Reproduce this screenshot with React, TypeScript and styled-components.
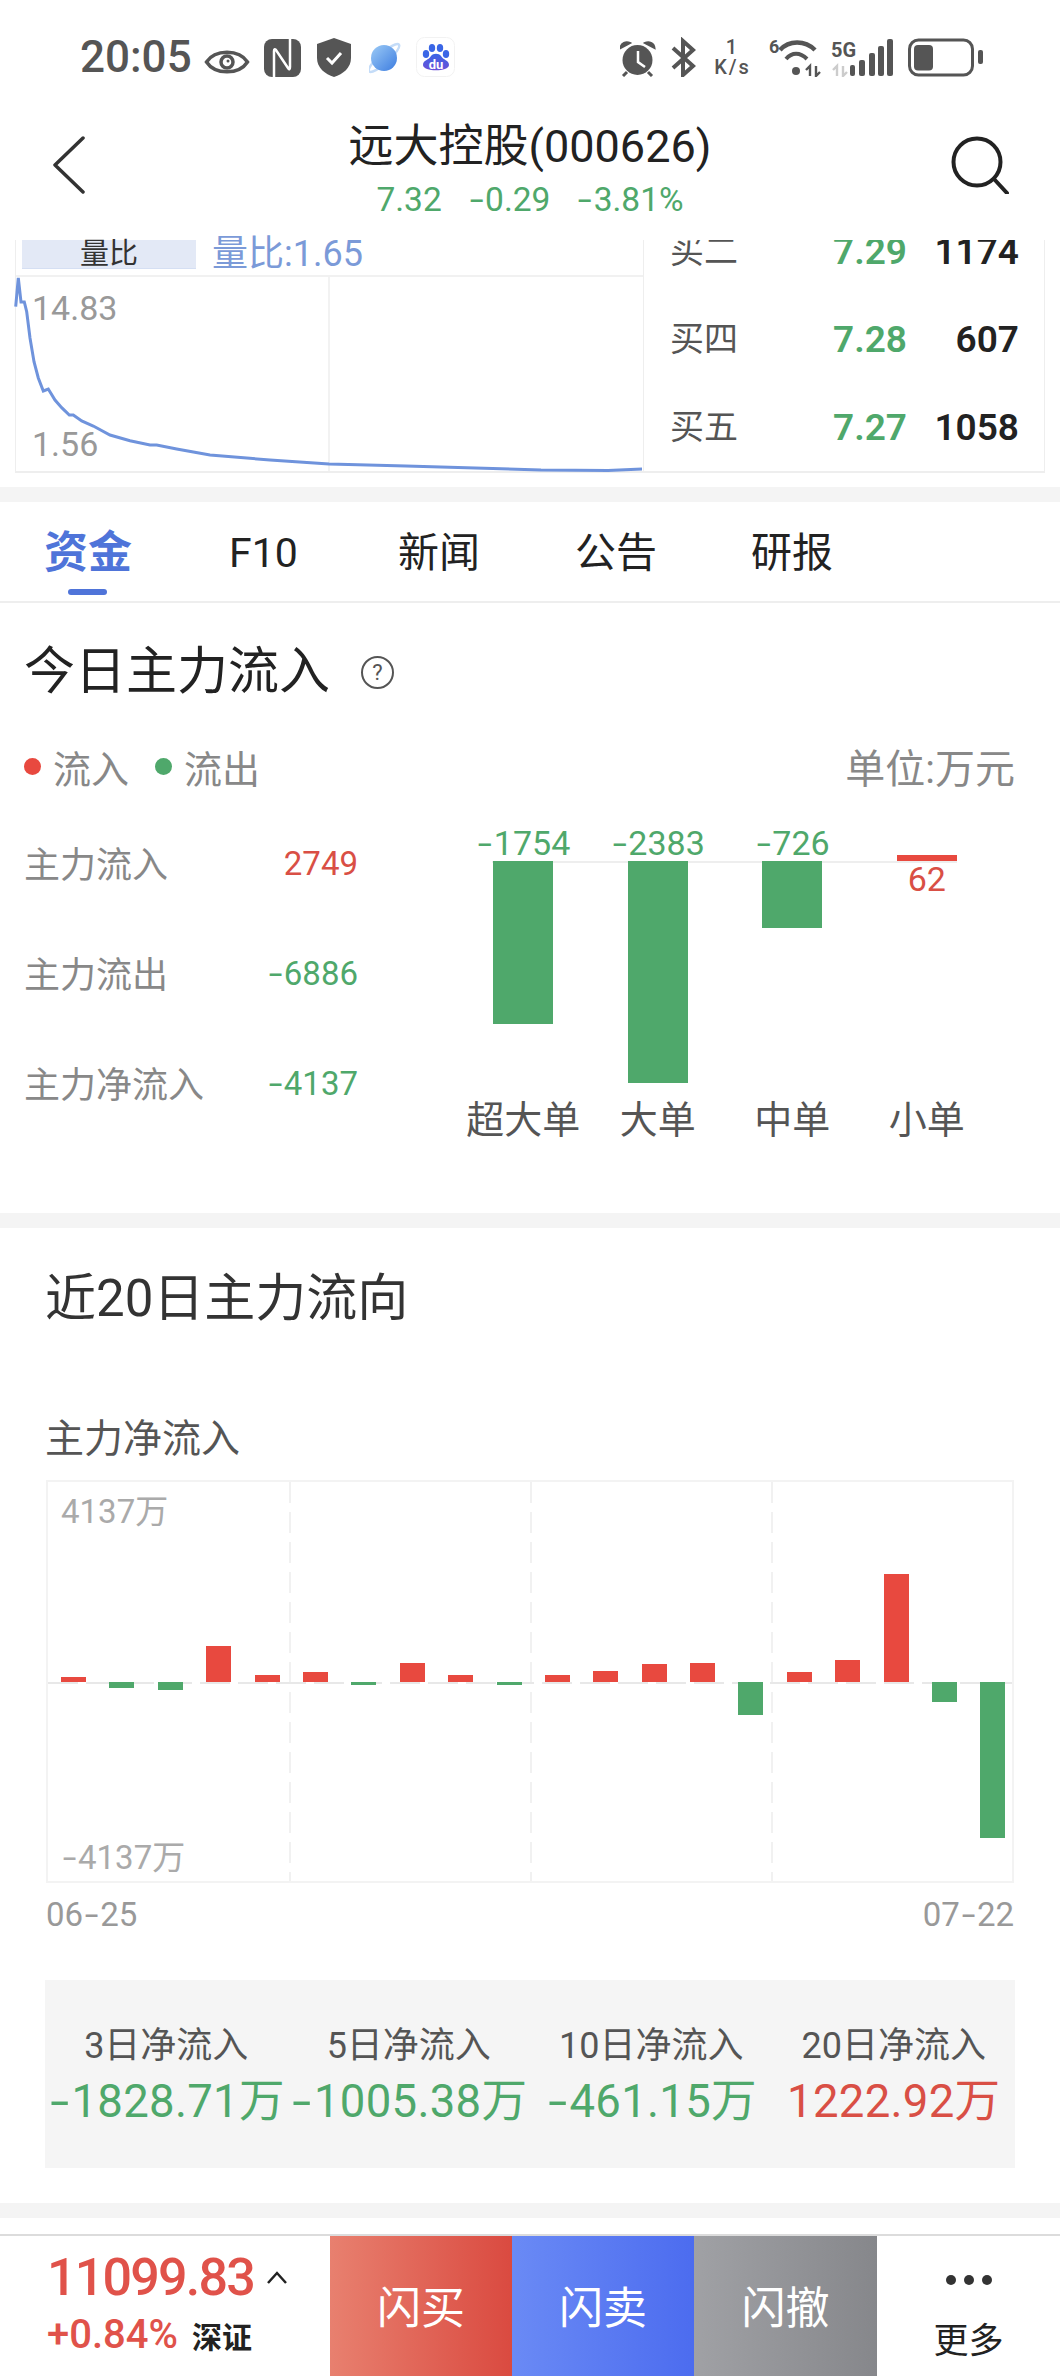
import React from 'react'
import styled, { createGlobalStyle } from 'styled-components'

const GREEN = '#4fa86b'
const RED = '#e8493f'
const TEXT_RED = '#d94f45'
const BLUE = '#4f74d9'
const ICON = '#555'

const GlobalStyle = createGlobalStyle`
  html, body {
    margin: 0;
    padding: 0;
    background: #fff;
    font-family: Roboto, "Noto Sans CJK SC", sans-serif;
  }
`

const Page = styled.div`
  width: 1060px;
  height: 2376px;
  overflow: hidden;
  background: #fff;
  display: flex;
  flex-direction: column;
`

const StatusBar = styled.div`
  height: 90px;
  padding: 37px 77px 0 80px;
  box-sizing: border-box;
  display: flex;
  justify-content: space-between;
  align-items: flex-start;
`

const StatusGroup = styled.div<{ $gap: number }>`
  display: flex;
  align-items: center;
  height: 40px;
  gap: ${(p) => p.$gap}px;
`

const Clock = styled.span`
  width: 110px;
  font-size: 44px;
  font-weight: 500;
  line-height: 40px;
  color: ${ICON};
`

const Speed = styled.div`
  width: 48px;
  padding-right: 9px;
  box-sizing: border-box;
  display: flex;
  flex-direction: column;
  align-items: center;
  font-size: 20px;
  font-weight: 500;
  line-height: 20px;
  letter-spacing: 2px;
  color: ${ICON};
`

const Nav = styled.div`
  height: 150px;
  padding: 32px 51px 0;
  box-sizing: border-box;
  display: grid;
  grid-template-columns: 1fr auto 1fr;
  align-items: start;
`

const BackIcon = styled.svg`
  margin: 14px 0 0 2px;
`

const SearchIcon = styled.svg`
  margin-top: 14px;
  justify-self: end;
`

const NavCenter = styled.div`
  display: flex;
  flex-direction: column;
  align-items: center;
  gap: 8px;
`

const NavTitle = styled.div`
  font-size: 45px;
  line-height: 50px;
  color: #222;
`

const NavQuote = styled.div`
  display: flex;
  gap: 26px;
  font-size: 33.5px;
  line-height: 40px;
  color: ${GREEN};
`

// the source font draws a much wider minus than Roboto does
const Dash = styled.span`
  display: inline-block;
  padding: 0 0.12em;
  transform: scaleX(1.5);
`

const Quote = styled.div`
  height: 231px;
  margin: 0 15px 0 15px;
  display: grid;
  grid-template-columns: 628px 1fr;
  border-bottom: 2px solid #eee;
  box-sizing: content-box;
`

const Trend = styled.div`
  display: flex;
  flex-direction: column;
  border-left: 1px solid #eee;
`

const IndicatorRow = styled.div`
  height: 37px;
  flex-shrink: 0;
  box-sizing: border-box;
  padding-left: 6px;
  display: flex;
  align-items: flex-start;
  gap: 16px;
  border-bottom: 2px solid #f1f1f1;
`

const IndicatorTab = styled.div`
  width: 174px;
  height: 29px;
  box-sizing: border-box;
  border-bottom: 1px solid #d5dff3;
  background: #e3e9f6;
  color: #333;
  font-size: 29px;
  line-height: 28px;
  text-align: center;
`

const IndicatorValue = styled.div`
  color: #7b9ad8;
  font-size: 36px;
  line-height: 29px;
  height: 29px;
`

const TrendPlot = styled.div`
  position: relative;
  flex: 1;
`

const TrendSvg = styled.svg`
  display: block;
  position: absolute;
  left: 0;
  top: 0;
  overflow: visible;
`

const TrendLabel = styled.span<{ $top: number }>`
  position: absolute;
  left: 16px;
  top: ${(p) => p.$top}px;
  font-size: 34px;
  line-height: 36px;
  color: #999;
`

const Book = styled.div`
  display: flex;
  flex-direction: column;
  justify-content: flex-end;
  overflow: hidden;
  border-left: 1px solid #eee;
  border-right: 1px solid #eee;
`

const BookRow = styled.div`
  height: 88px;
  flex-shrink: 0;
  padding: 0 25px 0 26px;
  display: grid;
  grid-template-columns: 163px 1fr auto;
  align-items: center;
`

const BookLabel = styled.span`
  font-size: 34px;
  line-height: 40px;
  color: #555;
`

const BookPrice = styled.span`
  font-size: 37px;
  font-weight: 600;
  color: ${GREEN};
`

const BookVolume = styled.span`
  font-size: 37px;
  font-weight: 600;
  color: #222;
`

const Band = styled.div<{ $top?: number }>`
  height: 15px;
  flex-shrink: 0;
  margin-top: ${(p) => p.$top ?? 0}px;
  background: #f4f4f4;
`

const Tabs = styled.div`
  height: 101px;
  flex-shrink: 0;
  box-sizing: border-box;
  padding: 26px 0 0 44px;
  display: grid;
  grid-template-columns: 185px 169px 177px 176px auto;
  justify-content: start;
  border-bottom: 2px solid #eee;
`

const Tab = styled.div<{ $active?: boolean }>`
  position: relative;
  height: 50px;
  font-size: ${(p) => (p.$active ? 44 : 41)}px;
  line-height: 50px;
  font-weight: ${(p) => (p.$active ? 700 : 400)};
  color: ${(p) => (p.$active ? BLUE : '#222')};

  ${(p) =>
    p.$active &&
    `
    &::after {
      content: '';
      position: absolute;
      left: 24px;
      top: 61px;
      width: 39px;
      height: 6px;
      border-radius: 3px;
      background: ${BLUE};
    }
  `}
`

const TodaySection = styled.section`
  height: 610px;
  flex-shrink: 0;
  box-sizing: border-box;
  padding: 44px 45px 0 24px;
`

const TitleRow = styled.div`
  display: flex;
  align-items: center;
  gap: 30px;
  height: 50px;
`

const TodayTitle = styled.h2`
  margin: 0;
  font-size: 51px;
  font-weight: 400;
  line-height: 50px;
  color: #222;
`

const LegendRow = styled.div`
  margin-top: 47px;
  height: 44px;
  display: flex;
  align-items: center;
  font-size: 38px;
  color: #888;
`

const LegendItem = styled.div`
  display: flex;
  align-items: center;
  gap: 12px;
  margin: 0 26px 0 0;
`

const LegendDot = styled.i<{ $color: string }>`
  width: 17px;
  height: 17px;
  border-radius: 50%;
  background: ${(p) => p.$color};
`

const Unit = styled.div`
  margin-left: auto;
  font-size: 40px;
`

const TodayBody = styled.div`
  margin-top: 20px;
  display: flex;
`

const Stats = styled.div`
  width: 334px;
  flex-shrink: 0;
`

const StatRow = styled.div`
  height: 110px;
  display: flex;
  justify-content: space-between;
  align-items: center;
`

const StatLabel = styled.span`
  font-size: 36px;
  line-height: 44px;
  margin-top: 5px;
  color: #888;
`

const StatValue = styled.span<{ $color: string }>`
  font-size: 33px;
  color: ${(p) => p.$color};
`

const FlowChart = styled.div`
  position: relative;
  margin-left: 98px;
  width: 538px;
  display: grid;
  grid-template-columns: repeat(4, 134.5px);

  &::before {
    content: '';
    position: absolute;
    left: 36px;
    top: 53px;
    width: 465px;
    height: 2px;
    background: #eee;
  }
`

const FlowColumn = styled.div`
  display: flex;
  flex-direction: column;
  align-items: center;
  position: relative;
`

const FlowAbove = styled.div`
  height: 53px;
  display: flex;
  flex-direction: column;
  justify-content: flex-end;
  align-items: center;
`

const FlowBelow = styled.div`
  height: 234px;
  display: flex;
  flex-direction: column;
  align-items: center;
`

const FlowValue = styled.span<{ $color: string }>`
  font-size: 34px;
  line-height: 36px;
  white-space: nowrap;
  color: ${(p) => p.$color};
`

const FlowBar = styled.div<{ $color: string; $h: number }>`
  width: 60px;
  height: ${(p) => p.$h}px;
  flex-shrink: 0;
  background: ${(p) => p.$color};
`

const FlowLabel = styled.div`
  height: 50px;
  font-size: 38px;
  line-height: 50px;
  color: #555;
`

const TrendSection = styled.section`
  flex-shrink: 0;
  box-sizing: border-box;
  padding: 43px 45px 0;
`

const TrendTitle = styled.h2`
  margin: 0;
  font-size: 51px;
  line-height: 56px;
  font-weight: 400;
  color: #333;
`

const TrendSub = styled.div`
  margin-top: 90px;
  font-size: 39px;
  line-height: 44px;
  color: #555;
`

const NetChart = styled.div`
  position: relative;
  margin: 19px 0 0 1px;
  width: 968px;
  height: 403px;
  box-sizing: border-box;
  border: 2px solid #f3f3f3;
`

const GridLines = styled.div`
  position: absolute;
  inset: 0;
  display: grid;
  grid-template-columns: repeat(4, 1fr);

  > div + div {
    background: repeating-linear-gradient(#f1f1f1 0 21px, transparent 21px 30px) left top / 2px 100% no-repeat;
  }
`

const ZeroLine = styled.div`
  position: absolute;
  left: 0;
  right: 0;
  top: 200px;
  height: 2px;
  background: repeating-linear-gradient(90deg, #e8e8e8 0 30px, transparent 30px 38px);
`

const NetBars = styled.div`
  position: absolute;
  inset: 0;
  padding-left: 13px;
  display: flex;
`

const NetSlot = styled.div`
  width: 48.4px;
  flex-shrink: 0;
  display: flex;
  flex-direction: column;
`

const NetUp = styled.div`
  height: 200px;
  display: flex;
  flex-direction: column;
  justify-content: flex-end;
`

const NetBar = styled.div<{ $color: string; $h: number }>`
  width: 25px;
  height: ${(p) => p.$h}px;
  background: ${(p) => p.$color};
`

const NetAxis = styled.span<{ $top: number }>`
  position: absolute;
  left: 13px;
  top: ${(p) => p.$top}px;
  font-size: 33px;
  line-height: 36px;
  color: #aaa;
`

const DateRow = styled.div`
  margin: 12px 0 0 1px;
  width: 968px;
  display: flex;
  justify-content: space-between;
  font-size: 33px;
  line-height: 40px;
  color: #999;
`

const Summary = styled.div`
  margin-top: 45px;
  height: 188px;
  background: #f5f5f5;
  display: grid;
  grid-template-columns: repeat(4, 1fr);
  box-sizing: border-box;
  padding-top: 43px;
`

const SummaryItem = styled.div`
  display: flex;
  flex-direction: column;
  align-items: center;
  white-space: nowrap;
`

const SummaryLabel = styled.span`
  font-size: 36px;
  line-height: 46px;
  color: #555;
`

const SummaryValue = styled.span<{ $color: string }>`
  margin-top: 6px;
  font-size: 45.5px;
  line-height: 54px;
  letter-spacing: 0.3px;
  color: ${(p) => p.$color};
`

const Footer = styled.div`
  margin-top: 16px;
  flex: 1;
  border-top: 2px solid #dcdcdc;
  display: grid;
  grid-template-columns: 330px 182px 182px 183px 1fr;
`

const IndexBox = styled.div`
  padding: 18px 0 0 47px;
  display: flex;
  flex-direction: column;
`

const IndexTop = styled.div`
  display: flex;
  align-items: center;
  gap: 12px;
  height: 48px;
`

const IndexValue = styled.span`
  font-size: 52px;
  font-weight: 500;
  line-height: 48px;
  letter-spacing: -1.8px;
  color: #e0524a;
`

const IndexBottom = styled.div`
  margin-top: 10px;
  display: flex;
  align-items: center;
  gap: 14px;
`

const IndexChange = styled.span`
  font-size: 40px;
  font-weight: 500;
  color: #e0524a;
  line-height: 46px;
`

const IndexName = styled.span`
  font-size: 30px;
  font-weight: 700;
  color: #222;
`

const Flash = styled.div<{ $from: string; $to: string }>`
  display: flex;
  align-items: center;
  justify-content: center;
  padding-bottom: 2px;
  font-size: 44px;
  color: #fff;
  background: linear-gradient(90deg, ${(p) => p.$from}, ${(p) => p.$to});
`

const More = styled.div`
  display: flex;
  flex-direction: column;
  align-items: center;
  padding-top: 39px;
  gap: 35px;
`

const MoreDots = styled.div`
  display: flex;
  gap: 8px;
`

const MoreDot = styled.i`
  width: 10px;
  height: 10px;
  border-radius: 50%;
  background: #333;
`

const MoreLabel = styled.span`
  font-size: 35px;
  line-height: 44px;
  color: #222;
`

const withDash = (text: string) => {
  const at = text.indexOf('-')
  if (at < 0) return text
  return (
    <>
      {text.slice(0, at)}
      <Dash>-</Dash>
      {text.slice(at + 1)}
    </>
  )
}

const books = [
  { label: '买二', price: '7.29', volume: '1174' },
  { label: '买四', price: '7.28', volume: '607' },
  { label: '买五', price: '7.27', volume: '1058' },
]

const stats = [
  { label: '主力流入', value: '2749', color: TEXT_RED },
  { label: '主力流出', value: '-6886', color: GREEN },
  { label: '主力净流入', value: '-4137', color: GREEN },
]

const flows = [
  { label: '超大单', value: '-1754', h: 163 },
  { label: '大单', value: '-2383', h: 222 },
  { label: '中单', value: '-726', h: 67 },
  { label: '小单', value: '62', h: 6, up: true },
]

const netBars = [5, -6, -8, 36, 7.5, 10, -3, 19, 7, -3, 7, 11, 18.5, 19, -32.5, 10, 22.5, 108, -20, -156]

const summary = [
  { label: '3日净流入', value: '-1828.71万', color: GREEN },
  { label: '5日净流入', value: '-1005.38万', color: GREEN },
  { label: '10日净流入', value: '-461.15万', color: GREEN },
  { label: '20日净流入', value: '1222.92万', color: TEXT_RED },
]

const trendLine =
  'M15.7 306.7 L18.3 278 L21 302 L24.3 302 L26.7 311.7 L30 338 L34 361.7 L38.3 378 L43.3 391 L48.3 389 L55 400 L61.7 407.7 L69.3 415 L73.3 415 L81.7 421 L93.3 426 L110 435 L130 440.7 L150 445 L156.7 445 L176.7 449 L210 455 L270 460 L329 464 L406 466 L541 470 L608 470.5 L642 469'

const App: React.FC = () => (
  <Page>
    <GlobalStyle />
    <StatusBar>
      <StatusGroup $gap={14}>
        <Clock>20:05</Clock>
        <svg width="46" height="40" viewBox="0 37 46 40" fill="none" stroke={ICON}>
          <path d="M2.5 62 C11 49 35 49 43.5 62 C35 75 11 75 2.5 62Z" strokeWidth="3.5" />
          <circle cx="23" cy="62" r="6" strokeWidth="3.5" />
          <circle cx="24" cy="61" r="1.5" fill={ICON} stroke="none" />
        </svg>
        <svg width="39" height="40" viewBox="0 37 39 40" fill="none">
          <rect x="0" y="39" width="37" height="38" rx="8" fill={ICON} />
          <path d="M10 77 V51 Q10 48 12 50 L24 68 Q26 71 26 67 V39" stroke="#fff" strokeWidth="2.5" />
        </svg>
        <svg width="38" height="40" viewBox="0 37 38 40">
          <path d="M17 38 L34 44 V58 C34 68 26 74 17 77 C8 74 0 68 0 58 V44Z" fill={ICON} />
          <path d="M10 58 L15 63 L24 53" fill="none" stroke="#fff" strokeWidth="3" />
        </svg>
        <svg width="33" height="40" viewBox="0 37 33 40">
          <defs>
            <linearGradient id="planet" x1="0" y1="0" x2="1" y2="1">
              <stop offset="0" stopColor="#9ccbf6" />
              <stop offset="1" stopColor="#3d7de0" />
            </linearGradient>
          </defs>
          <ellipse cx="15" cy="58" rx="20" ry="5" fill="none" stroke="#c4dcf8" strokeWidth="2.5" transform="rotate(-42 15 58)" />
          <circle cx="15" cy="58" r="13" fill="url(#planet)" />
        </svg>
        <svg width="39" height="40" viewBox="0 37 39 40">
          <defs>
            <linearGradient id="paw" x1="0" y1="0" x2="0" y2="1">
              <stop offset="0" stopColor="#3a66e6" />
              <stop offset="1" stopColor="#6a4fd8" />
            </linearGradient>
          </defs>
          <rect x="0.5" y="37.5" width="38" height="39" rx="8" fill="#fff" stroke="#f2f2f2" />
          <ellipse cx="10" cy="54" rx="3.2" ry="4" fill="#3a66e6" />
          <ellipse cx="16" cy="48" rx="3.2" ry="4" fill="#3a66e6" />
          <ellipse cx="24" cy="48" rx="3.2" ry="4" fill="#3a66e6" />
          <ellipse cx="30" cy="54" rx="3.2" ry="4" fill="#3a66e6" />
          <path d="M7 65 C7 60 13 60 15 56 C17 53 23 53 25 56 C27 60 33 60 33 65 C33 72 7 72 7 65Z" fill="url(#paw)" />
          <text x="20" y="69" fontSize="13" fontWeight="700" textAnchor="middle" fill="#fff">du</text>
        </svg>
      </StatusGroup>
      <StatusGroup $gap={8}>
        <svg width="43" height="40" viewBox="0 37 43 40" fill="none">
          <circle cx="17.5" cy="60" r="15" fill={ICON} />
          <path d="M18 51 V62 L25 67" stroke="#fff" strokeWidth="2.5" />
          <path d="M0.5 48 C1 43 6 41 10 43 Z M34.5 48 C34 43 29 41 25 43 Z" fill={ICON} stroke={ICON} strokeWidth="2" />
          <path d="M7 72 L3 76 M28 72 L32 76" stroke={ICON} strokeWidth="3" />
        </svg>
        <svg width="34" height="40" viewBox="0 37 34 40" fill="none">
          <path d="M2 48 L22 66 L12 75 V41 L22 50 L2 68" stroke={ICON} strokeWidth="4" />
        </svg>
        <Speed>
          <span>1</span>
          <span>K/s</span>
        </Speed>
        <svg width="54" height="40" viewBox="0 37 54 40" fill="none">
          <text x="0" y="53" fontSize="18" fontWeight="700" fill={ICON}>6</text>
          <path d="M11 50 C20 40 36 40 46 50" stroke={ICON} strokeWidth="4.5" />
          <path d="M17 59 C23 52 31 52 38 59" stroke={ICON} strokeWidth="4" />
          <circle cx="27" cy="71" r="4" fill={ICON} />
          <path d="M41 76 V66 L37 70 M47 66 V76 L51 72" stroke={ICON} strokeWidth="2.4" />
        </svg>
        <svg width="69" height="40" viewBox="0 37 69 40" fill="none">
          <text x="0" y="57" fontSize="20" fontWeight="700" fill={ICON}>5G</text>
          <path d="M6 76 V66 L2 70 M12 66 V76 L16 72" stroke="#ccc" strokeWidth="2.4" />
          <rect x="19" y="65" width="5" height="11" rx="2" fill={ICON} />
          <rect x="28" y="60" width="6" height="16" rx="2" fill={ICON} />
          <rect x="38" y="53" width="6" height="23" rx="2" fill={ICON} />
          <rect x="47" y="46" width="6" height="30" rx="2" fill={ICON} />
          <rect x="56" y="39" width="6" height="37" rx="2" fill={ICON} />
        </svg>
        <svg width="75" height="40" viewBox="0 37 75 40" fill="none">
          <rect x="1.5" y="40" width="63" height="35" rx="9" stroke={ICON} strokeWidth="3" />
          <rect x="6" y="45" width="19" height="25.5" rx="4" fill={ICON} />
          <rect x="70" y="50" width="5" height="14" rx="2" fill={ICON} />
        </svg>
      </StatusGroup>
    </StatusBar>

    <Nav>
      <BackIcon width="32" height="58" viewBox="0 0 32 58" fill="none">
        <path d="M30 2 L2 29 L30 56" stroke="#333" strokeWidth="3.5" strokeLinecap="round" strokeLinejoin="round" />
      </BackIcon>
      <NavCenter>
        <NavTitle>远大控股(000626)</NavTitle>
        <NavQuote>
          <span>7.32</span>
          <span>{withDash('-0.29')}</span>
          <span>{withDash('-3.81%')}</span>
        </NavQuote>
      </NavCenter>
      <SearchIcon width="58" height="58" viewBox="0 0 58 58" fill="none">
        <circle cx="26" cy="26" r="23.5" stroke="#222" strokeWidth="4" />
        <path d="M43 43 L56 57" stroke="#222" strokeWidth="4" strokeLinecap="round" />
      </SearchIcon>
    </Nav>

    <Quote>
      <Trend>
        <IndicatorRow>
          <IndicatorTab>量比</IndicatorTab>
          <IndicatorValue>量比:1.65</IndicatorValue>
        </IndicatorRow>
        <TrendPlot>
          <TrendSvg width="626" height="194" viewBox="16 277 626 194" fill="none">
            <path d="M329 277 V471" stroke="#eee" strokeWidth="1.5" />
            <path d={trendLine} stroke="#6f93dc" strokeWidth="3" />
          </TrendSvg>
          <TrendLabel $top={13}>14.83</TrendLabel>
          <TrendLabel $top={149}>1.56</TrendLabel>
        </TrendPlot>
      </Trend>
      <Book>
        {books.map((row) => (
          <BookRow key={row.label}>
            <BookLabel>{row.label}</BookLabel>
            <BookPrice>{row.price}</BookPrice>
            <BookVolume>{row.volume}</BookVolume>
          </BookRow>
        ))}
      </Book>
    </Quote>

    <Band $top={14} />

    <Tabs>
      <Tab $active>资金</Tab>
      <Tab>F10</Tab>
      <Tab>新闻</Tab>
      <Tab>公告</Tab>
      <Tab>研报</Tab>
    </Tabs>

    <TodaySection>
      <TitleRow>
        <TodayTitle>今日主力流入</TodayTitle>
        <svg width="35" height="35" viewBox="0 0 35 35" fill="none">
          <circle cx="17.5" cy="17.5" r="15.5" stroke="#555" strokeWidth="2" />
          <text x="17.5" y="25" fontSize="22" textAnchor="middle" fill="#555">?</text>
        </svg>
      </TitleRow>
      <LegendRow>
        <LegendItem>
          <LegendDot $color={RED} />
          流入
        </LegendItem>
        <LegendItem>
          <LegendDot $color={GREEN} />
          流出
        </LegendItem>
        <Unit>单位:万元</Unit>
      </LegendRow>
      <TodayBody>
        <Stats>
          {stats.map((row) => (
            <StatRow key={row.label}>
              <StatLabel>{row.label}</StatLabel>
              <StatValue $color={row.color}>{withDash(row.value)}</StatValue>
            </StatRow>
          ))}
        </Stats>
        <FlowChart>
          {flows.map((col) => (
            <FlowColumn key={col.label}>
              <FlowAbove>
                {col.up ? (
                  <FlowBar $color={RED} $h={col.h} />
                ) : (
                  <FlowValue $color={GREEN}>{withDash(col.value)}</FlowValue>
                )}
              </FlowAbove>
              <FlowBelow>
                {col.up ? (
                  <FlowValue $color={TEXT_RED}>{col.value}</FlowValue>
                ) : (
                  <FlowBar $color={GREEN} $h={col.h} />
                )}
              </FlowBelow>
              <FlowLabel>{col.label}</FlowLabel>
            </FlowColumn>
          ))}
        </FlowChart>
      </TodayBody>
    </TodaySection>

    <Band />

    <TrendSection>
      <TrendTitle>近20日主力流向</TrendTitle>
      <TrendSub>主力净流入</TrendSub>
      <NetChart>
        <GridLines>
          <div />
          <div />
          <div />
          <div />
        </GridLines>
        <ZeroLine />
        <NetBars>
          {netBars.map((v, i) => (
            <NetSlot key={i}>
              <NetUp>{v > 0 && <NetBar $color={RED} $h={v} />}</NetUp>
              {v < 0 && <NetBar $color={GREEN} $h={-v} />}
            </NetSlot>
          ))}
        </NetBars>
        <NetAxis $top={12}>4137万</NetAxis>
        <NetAxis $top={358}>{withDash('-4137万')}</NetAxis>
      </NetChart>
      <DateRow>
        <span>{withDash('06-25')}</span>
        <span>{withDash('07-22')}</span>
      </DateRow>
      <Summary>
        {summary.map((item) => (
          <SummaryItem key={item.label}>
            <SummaryLabel>{item.label}</SummaryLabel>
            <SummaryValue $color={item.color}>{withDash(item.value)}</SummaryValue>
          </SummaryItem>
        ))}
      </Summary>
    </TrendSection>

    <Band $top={35} />

    <Footer>
      <IndexBox>
        <IndexTop>
          <IndexValue>11099.83</IndexValue>
          <svg width="22" height="14" viewBox="0 0 22 14" fill="none">
            <path d="M2 12 L11 2 L20 12" stroke="#222" strokeWidth="2.5" />
          </svg>
        </IndexTop>
        <IndexBottom>
          <IndexChange>+0.84%</IndexChange>
          <IndexName>深证</IndexName>
        </IndexBottom>
      </IndexBox>
      <Flash $from="#e8806f" $to="#da4a40">闪买</Flash>
      <Flash $from="#6a8af5" $to="#4c6cef">闪卖</Flash>
      <Flash $from="#a0a1a5" $to="#86878b">闪撤</Flash>
      <More>
        <MoreDots>
          <MoreDot />
          <MoreDot />
          <MoreDot />
        </MoreDots>
        <MoreLabel>更多</MoreLabel>
      </More>
    </Footer>
  </Page>
)

export default App
